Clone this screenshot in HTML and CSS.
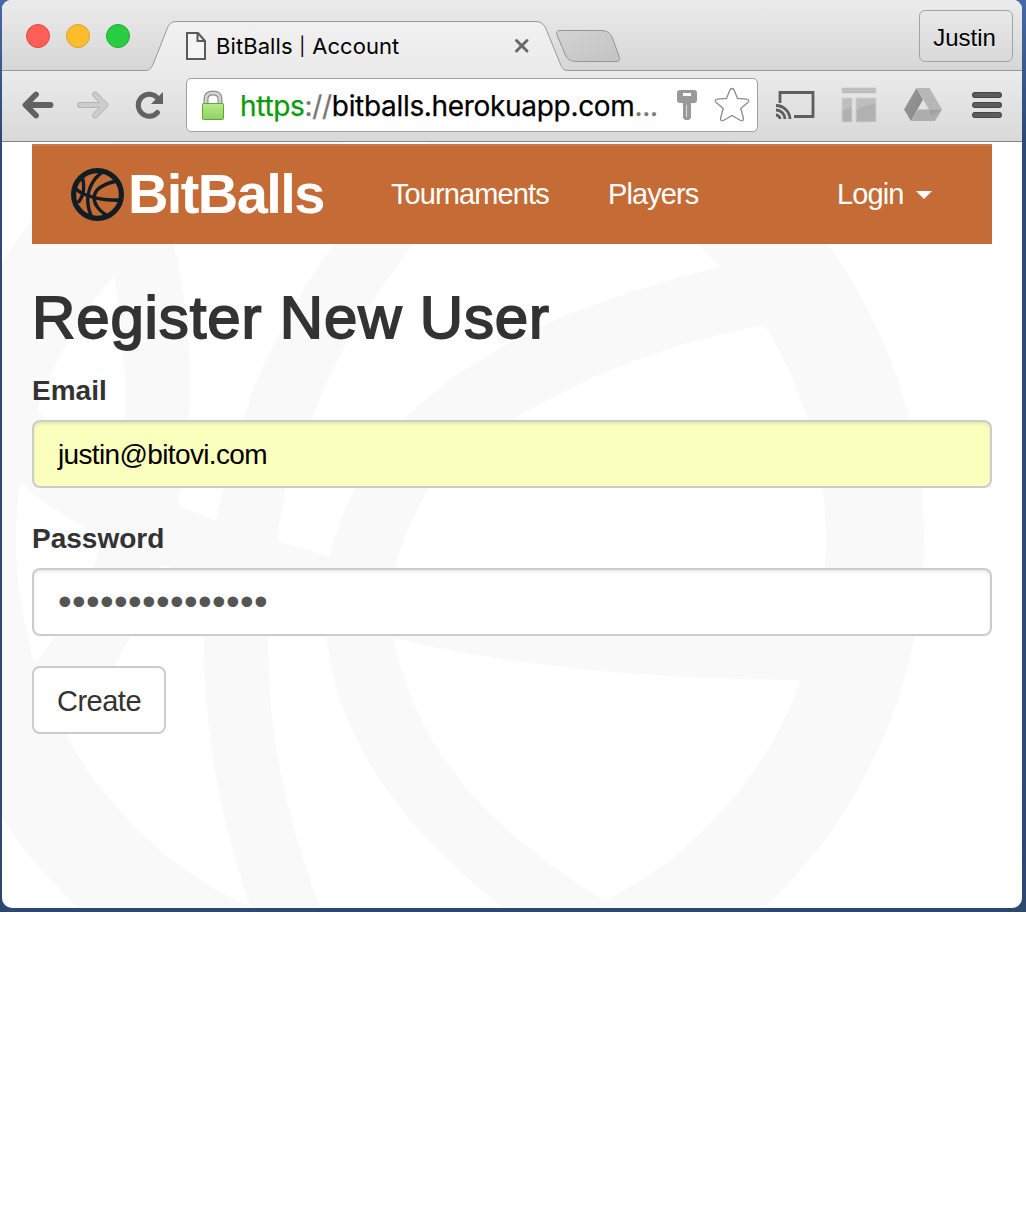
FILE: index.html
```html
<!DOCTYPE html>
<html lang="en">
<head>
<meta charset="utf-8">
<title>BitBalls | Account</title>
<link rel="stylesheet" href="styles.css">
</head>
<body>
<svg class="defs" width="0" height="0" aria-hidden="true">
  <defs>
    <linearGradient id="tabFill" x1="0" y1="0" x2="0" y2="1"><stop offset="0" stop-color="#f1f1f1"/><stop offset="1" stop-color="#ebebeb"/></linearGradient>
    <linearGradient id="newTabFill" x1="0" y1="0" x2="1" y2="1"><stop offset="0" stop-color="#d3d3d3"/><stop offset="1" stop-color="#c3c3c3"/></linearGradient>
    <linearGradient id="lockFill" x1="0" y1="0" x2="0" y2="1"><stop offset="0" stop-color="#b9ea8c"/><stop offset="1" stop-color="#8fd162"/></linearGradient>
    <linearGradient id="driveLeft" x1="0" y1="0" x2="1" y2="1"><stop offset="0" stop-color="#999"/><stop offset="1" stop-color="#868686"/></linearGradient>
    <clipPath id="ballClip"><circle cx="421" cy="540" r="454"/></clipPath>
    <symbol id="ball" viewBox="-82 37 1006 1006">
      <circle cx="421" cy="540" r="454" fill="none" stroke="currentColor" stroke-width="98"/>
      <g clip-path="url(#ballClip)" fill="currentColor">
        <path d="M90 180C118 270 127 345 125 420C122 475 112 520 98 555C84 592 62 630 36 662L10 694L85 705Q105 684 114 665L129 640C150 600 168 555 178 505C186 465 190 425 189.500 370C188 315 182 280 174 244Q163 200 140 150Z"/>
        <path d="M-20 350Q10 388 37 410C80 450 125 480 178 505L215 520L277 541L330 557C460 597 620 612 860 612L860 682L800 680C660 679 520 668 393 638C265 605 165 570 98 535Q53 512 19 482L-20 445Z"/>
        <path d="M500 80C420 150 370 190 334 244C290 305 260 365 243 420Q225 480 216 520Q203 580 204 650C205 740 222 825 250 905L270 970L345 970L320 907C285 815 268 735 268 640Q268 590 277 541L285 490Q294 455 312 420C335 355 370 300 414 244Q465 180 575 120Z"/>
        <path d="M790 240L720 267C655 283 610 298 563 316Q510 340 458 374Q428 396 402 421Q372 452 354 490Q337 524 330 557Q323 600 327 642Q334 700 366 758Q415 840 504 908L590 985L665 940L602 900C500 835 435 770 405 680Q393 650 390 610Q390 582 395 565Q408 525 428 490C447 464 480 438 510 421Q530 408 556 396Q602 371 654 354Q705 336 766 325L840 310Z"/>
      </g>
    </symbol>
  </defs>
</svg>
<div class="desktop">
  <div class="window">
    <header class="tab-strip">
      <div class="lights"><span class="light close"></span><span class="light minimize"></span><span class="light zoom"></span></div>
      <div class="tab">
        <svg class="tab-shape" viewBox="144 0 424 71" width="424" height="71"><path d="M144 71V70.500H146C150 70.500 152 67 154 62L167 29C169 24 171 21.500 177 21.500H535C541 21.500 544 24 546 29L560 63C562 68 563 70.500 568 70.500V71Z" fill="url(#tabFill)"/><path d="M144 70.500H146C150 70.500 152 67 154 62L167 29C169 24 171 21.500 177 21.500H535C541 21.500 544 24 546 29L560 63C562 68 563 70.500 568 70.500" fill="none" stroke="#999"/></svg>
        <svg class="page-icon" viewBox="0 0 22 30" width="22" height="30"><path d="M2 2H13L20 10V28H2ZM12.500 2V10H20" fill="#f5f5f5" stroke="#5a5a5a" stroke-width="2"/></svg>
        <span class="tab-title">BitBalls <span class="bar">|</span> Account</span>
        <svg class="tab-close" viewBox="0 0 16 16" width="16" height="16"><path d="M2.500 2.500L13 13M13 2.500L2.500 13" stroke="#6a6a6a" stroke-width="3" stroke-linecap="round"/></svg>
      </div>
      <svg class="new-tab" viewBox="555 28 68 36" width="68" height="36"><path d="M560 30.500H601C607 30.500 610 33 612 37L619 56C620.500 60 619 61.500 616 61.500H577C570 61.500 567 59 565 54L557 35C556 32 557 30.500 560 30.500Z" fill="url(#newTabFill)" stroke="#959595"/></svg>
      <div class="profile">Justin</div>
    </header>
    <div class="toolbar">
      <svg class="back" viewBox="0 0 32 28" width="32" height="28"><path d="M14 3.500L3.500 14L14 24.500M4 14H28.500" fill="none" stroke="#626262" stroke-width="5.800" stroke-linecap="round" stroke-linejoin="round"/></svg>
      <svg class="forward" viewBox="0 0 32 28" width="32" height="28"><path d="M18 3.500L28.500 14L18 24.500M28 14H3" fill="none" stroke="#b3b3b3" stroke-width="5.800" stroke-linecap="round" stroke-linejoin="round"/><path d="M18 3.500L28.500 14L18 24.500M28 14H3" fill="none" stroke="#cdcdcd" stroke-width="4" stroke-linecap="round" stroke-linejoin="round"/></svg>
      <svg class="reload" viewBox="0 0 30 30" width="30" height="30"><path d="M22.500 22.500A11 11 0 1 1 21.800 7.200" fill="none" stroke="#626262" stroke-width="5" stroke-linecap="round"/><path d="M28 2V14H16Z" fill="#626262"/></svg>
      <div class="omnibox">
        <svg class="lock" viewBox="0 0 24 32" width="24" height="32"><path d="M5 14V9Q5 3 12 3T19 9V14" fill="none" stroke="#8c8c8c" stroke-width="5"/><path d="M5 14V9Q5 3 12 3T19 9V14" fill="none" stroke="#d5d5d5" stroke-width="2.600"/><rect x="1.500" y="13.500" width="21" height="16" rx="1" fill="url(#lockFill)" stroke="#64a33c"/></svg>
        <span class="url"><span class="secure">https</span><span class="muted">://</span>bitballs.herokuapp.com<span class="muted">...</span></span>
        <svg class="key" viewBox="0 0 22 32" width="22" height="32"><path fill-rule="evenodd" d="M4 1H18Q21 1 21 4V11Q21 14 18 14H15V29L13 31H9L7 29V14H4Q1 14 1 11V4Q1 1 4 1ZM7 4V7H15V4Z" fill="#999"/><path d="M10.500 16V28" stroke="#ddd"/></svg>
        <svg class="star" viewBox="0 0 36 36" width="36" height="36"><path d="M18 1.500Q19.500 1.500 20.300 3.500L23.500 11.500L32.500 12.200Q36.500 13 33.500 15.700L26.800 21.500L29.400 31Q29.700 34.800 26.500 33.500L18 28.500L9.500 33.500Q6.300 34.800 6.600 31L9.200 21.500L2.500 15.700Q-0.500 13 3.500 12.200L12.500 11.500L15.700 3.500Q16.500 1.500 18 1.500Z" fill="#fff" stroke="#8b8b8b" stroke-width="1.300"/></svg>
      </div>
      <svg class="cast" viewBox="0 0 40 32" width="40" height="32"><path d="M4 14V3.500H37V27.500H18" fill="none" stroke="#5e5e5e" stroke-width="2.800"/><path d="M0 16.500A14 14 0 0 1 14 30M0 21A9 9 0 0 1 9 30M0 26A4 4 0 0 1 4 30" fill="none" stroke="#5e5e5e" stroke-width="2.800"/></svg>
      <svg class="layout" viewBox="0 0 36 36" width="36" height="36"><path d="M1 1H35V6H1ZM1 11H11V35H1ZM15 11H35V35H15Z" fill="#b1b1b1"/><path d="M1 3.500H35" stroke="#c9c9c9" stroke-width="1.500"/><path d="M1 11H11V19L1 24ZM15 11H35V17Q24 17 15 23Z" fill="#bebebe"/><path d="M1 1H35V6H1ZM1 11H11V35H1ZM15 11H35V35H15Z" fill="none" stroke="#cfcfcf"/></svg>
      <svg class="drive" viewBox="0 0 38 34" width="38" height="34"><path d="M12.500 0L19 11.500L7 33L0 21.500Z" fill="url(#driveLeft)"/><path d="M12.500 0H25.500L38 21.500H25Z" fill="#b7b7b7"/><path d="M14 21.500H38L31 33H7Z" fill="#adadad"/><path d="M25 21.500H38L27 28Z" fill="#a2a2a2"/></svg>
      <svg class="menu" viewBox="0 0 30 28" width="30" height="28"><path d="M3 4H27M3 14H27M3 24H27" stroke="#454545" stroke-width="6" stroke-linecap="round"/><path d="M3 4H27M3 14H27M3 24H27" stroke="#5c5c5c" stroke-width="4" stroke-linecap="round"/></svg>
    </div>
    <main class="page">
      <svg class="watermark" width="1006" height="1006"><use href="#ball"/></svg>
      <nav class="navbar">
        <a class="brand"><svg class="brand-ball" width="53" height="53"><use href="#ball"/></svg><span class="brand-name">BitBalls</span></a>
        <a class="nav-link tournaments">Tournaments</a>
        <a class="nav-link players">Players</a>
        <a class="nav-link login">Login<span class="caret"></span></a>
      </nav>
      <form class="register">
        <h1>Register New User</h1>
        <label>Email</label>
        <div class="field autofilled">justin@bitovi.com</div>
        <label>Password</label>
        <div class="field"><span class="mask">•••••••••••••••</span></div>
        <button type="button" class="create">Create</button>
      </form>
    </main>
  </div>
</div>
</body>
</html>
```
FILE: styles.css
```css
* { box-sizing: border-box; }
body { margin: 0; background: #fff; font-family: "Liberation Sans", Arial, sans-serif; }
svg { display: block; flex: none; }
.defs { position: absolute; }
.desktop { width: 1026px; height: 912px; padding: 0 4px 4px 2px; background: linear-gradient(#456aa5, #2b4a75 15%, #2b4a75 85%, #2c4870); }
.window { height: 908px; display: flex; flex-direction: column; border-radius: 9px 9px 10px 10px; overflow: hidden; background: #fff; }

.tab-strip { height: 71px; display: flex; background: linear-gradient(#ebebeb, #d6d6d6); box-shadow: inset 0 -1px #999; padding-left: 24px; }
.lights { display: flex; gap: 16px; padding-top: 24px; }
.light { width: 24px; height: 24px; border-radius: 50%; border: 1px solid; }
.close { background: #ff5f57; border-color: #e2463f; }
.minimize { background: #ffbd2e; border-color: #dea123; }
.zoom { background: #28cd41; border-color: #1dae2c; }
.tab { position: relative; width: 424px; height: 71px; margin-left: 14px; display: flex; align-items: flex-start; }
.tab-shape { position: absolute; inset: 0; }
.page-icon, .tab-title, .tab-close { position: relative; }
.page-icon { margin: 31px 0 0 41px; }
.tab-title { margin: 31px 0 0 9px; width: 296px; font: 22px/30px Inter, sans-serif; letter-spacing: .08px; color: #000; white-space: nowrap; }
.bar { display: inline-block; width: 7px; font-size: 18px; line-height: 20px; text-align: center; vertical-align: 1px; }
.tab-close { margin: 38px 0 0 2px; }
.new-tab { margin: 28px 0 0 -13px; }
.profile { width: 94px; height: 52px; margin: 10px 9px 0 auto; padding-right: 3px; border: 1px solid #a3a3a3; border-radius: 6px; font-size: 24px; line-height: 54px; text-align: center; color: #000; text-shadow: 0 1px #f2f2f2; }

.toolbar { height: 71px; display: flex; align-items: center; padding-bottom: 2px; background: linear-gradient(#ebebeb, #d9d9d9); border-bottom: 1px solid #858585; }
.back { margin-left: 20px; }
.forward { margin-left: 23px; }
.reload { margin-left: 26px; }
.omnibox { margin-left: 21px; width: 572px; height: 54px; display: flex; align-items: center; background: #fff; border: 1px solid #a0a0a0; border-radius: 5px; }
.lock { margin-left: 14px; margin-top: 2px; }
.url { margin: 2px 0 0 15px; width: 421px; font: 28px/36px Inter, sans-serif; letter-spacing: -.32px; white-space: nowrap; color: #000; -webkit-text-stroke: .25px; }
.secure { color: #0a9b0a; }
.muted { color: #777; }
.key { margin-left: 15px; }
.star { margin-left: 16px; }
.cast { margin-left: 18px; }
.layout { margin-left: 25px; }
.drive { margin-left: 27px; }
.menu { margin-left: 30px; }

.page { position: relative; flex: 1; overflow: hidden; padding: 2px 30px 0; color: #333; }
.watermark { position: absolute; left: -84px; top: -105px; color: #f9f9f9; }
.navbar { position: relative; height: 100px; display: flex; align-items: center; background: #c56c36; border-top: 2px solid #c87a4c; color: #fff; padding: 0 0 2px 39px; }
.brand { display: flex; align-items: center; }
.brand-ball { color: #101d24; }
.brand-name { margin-left: 4px; width: 263px; font-size: 56px; font-weight: 700; line-height: 60px; letter-spacing: -1.6px; }
.nav-link { font-size: 29px; line-height: 40px; white-space: nowrap; letter-spacing: -.9px; }
.tournaments { width: 217px; }
.players { width: 229px; }
.login { display: flex; align-items: center; }
.caret { margin: 2px 0 0 13px; border: 8px solid transparent; border-top-color: #fff; border-bottom: 0; }
.register { position: relative; }
h1 { margin: 41px 0 0; font-size: 60px; line-height: 66px; font-weight: 400; letter-spacing: .85px; -webkit-text-stroke: 1.8px #333; white-space: nowrap; }
label { display: block; margin-top: 19px; font-size: 28px; line-height: 42px; height: 40px; font-weight: 700; }
.field { height: 68px; margin: 10px 0 0; padding: 0 24px; border: 2px solid #ccc; border-radius: 8px; background: #fff; box-shadow: inset 0 2px 3px rgba(0, 0, 0, .09); font-size: 28px; line-height: 66px; letter-spacing: -.64px; color: #000; }
.field + label { margin-top: 30px; }
.autofilled { background: #faffbd; }
.mask { display: block; font-size: 39px; line-height: 64px; letter-spacing: .35px; color: #555; }
.create { display: block; width: 134px; height: 68px; margin: 30px 0 0; padding: 0; border: 2px solid #ccc; border-radius: 8px; background: #fff; font: 29px/66px "Liberation Sans", Arial, sans-serif; letter-spacing: -.5px; color: #333; }
```
